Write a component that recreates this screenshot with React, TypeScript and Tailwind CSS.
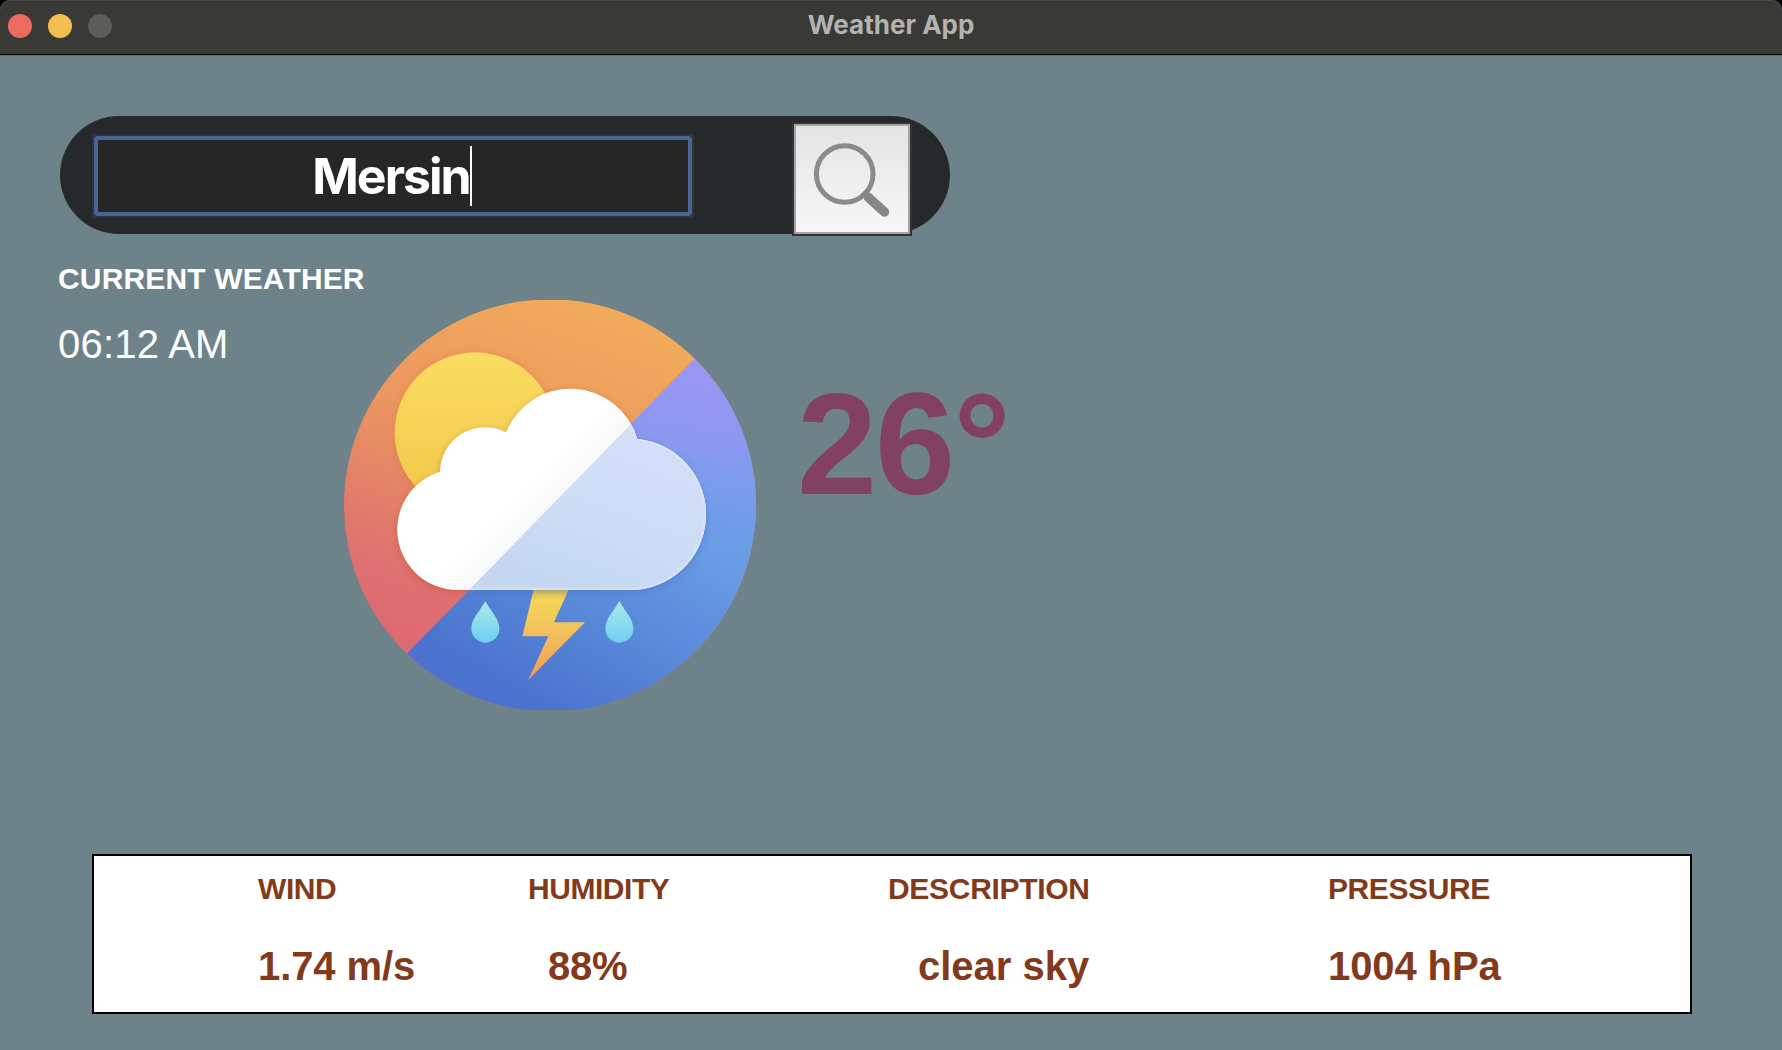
import React from "react";

const CLOUD =
  "M382 900 A181.5 181.5 0 0 1 330 545 A135 135 0 0 1 528 427 A208.6 208.6 0 0 1 922 447 A227 227 0 0 1 897 900 Z";

function Drop({ x }: { x: number }) {
  return (
    <path
      d={`M${x} 933 C${x + 13} 960 ${x + 42} 984 ${x + 42} 1016 A42 42 0 0 1 ${x - 42} 1016 C${x - 42} 984 ${x - 13} 960 ${x} 933 Z`}
      fill="url(#drop)"
    />
  );
}

function WeatherIcon() {
  return (
    <svg className="block h-[410px] w-[412px] shrink-0" viewBox="42 30 1236 1230" aria-label="Weather">
      <defs>
        <linearGradient id="warm" gradientUnits="userSpaceOnUse" x1="780" y1="60" x2="400" y2="1100">
          <stop offset="0" stopColor="#f1aa5b" />
          <stop offset="0.4" stopColor="#eb975f" />
          <stop offset="0.85" stopColor="#de7070" />
          <stop offset="1" stopColor="#dd6a70" />
        </linearGradient>
        <linearGradient id="cool" gradientUnits="userSpaceOnUse" x1="1100" y1="742" x2="760" y2="1334">
          <stop offset="0" stopColor="#6a9ce6" />
          <stop offset="0.5" stopColor="#5989d9" />
          <stop offset="1" stopColor="#4a72ce" />
        </linearGradient>
        <linearGradient id="violet" gradientUnits="userSpaceOnUse" x1="1130" y1="240" x2="1040" y2="800">
          <stop offset="0" stopColor="#9b95f4" />
          <stop offset="0.35" stopColor="#8d98f0" />
          <stop offset="0.65" stopColor="#7a9deb" stopOpacity="0.85" />
          <stop offset="1" stopColor="#6a9ce6" stopOpacity="0" />
        </linearGradient>
        <linearGradient id="sun" x1="0" y1="0" x2="0" y2="1">
          <stop offset="0" stopColor="#fadd62" />
          <stop offset="1" stopColor="#f2c648" />
        </linearGradient>
        <linearGradient id="bolt" x1="0" y1="0" x2="0" y2="1">
          <stop offset="0" stopColor="#dfbf4c" />
          <stop offset="0.14" stopColor="#f7d558" />
          <stop offset="0.5" stopColor="#f1be5b" />
          <stop offset="1" stopColor="#ee9c55" />
        </linearGradient>
        <linearGradient id="drop" x1="0" y1="0" x2="0" y2="1">
          <stop offset="0" stopColor="#a9e9e8" />
          <stop offset="1" stopColor="#6ecff3" />
        </linearGradient>
        <linearGradient id="white" gradientUnits="userSpaceOnUse" x1="590" y1="578" x2="662" y2="648">
          <stop offset="0" stopColor="#ffffff" />
          <stop offset="1" stopColor="#f8f8f8" />
        </linearGradient>
        <linearGradient id="glass" gradientUnits="userSpaceOnUse" x1="930" y1="420" x2="760" y2="900">
          <stop offset="0" stopColor="#d5def9" />
          <stop offset="0.5" stopColor="#cdddf6" />
          <stop offset="1" stopColor="#c6d8f1" />
        </linearGradient>
        <clipPath id="disc">
          <circle cx="660" cy="646" r="618" />
        </clipPath>
        <clipPath id="lower">
          <path d="M1295 0 L33 1294 H1320 V0 Z" />
        </clipPath>
        <clipPath id="cloud">
          <path d={CLOUD} />
        </clipPath>
        <filter id="soft" x="-10%" y="-10%" width="120%" height="120%">
          <feGaussianBlur stdDeviation="9" />
        </filter>
      </defs>
      <g clipPath="url(#disc)">
        <rect width="1320" height="1290" fill="url(#warm)" />
        <circle cx="435" cy="430" r="242" fill="#e0763c" opacity="0.5" filter="url(#soft)" />
        <circle cx="435" cy="428" r="241" fill="url(#sun)" />
        <g clipPath="url(#lower)">
          <rect width="1320" height="1290" fill="url(#cool)" />
          <rect width="1320" height="1290" fill="url(#violet)" />
        </g>
        <path d="M612 895 H718 L672 997 H765 L594 1171 L655 1039 H577 Z" fill="url(#bolt)" />
        <g filter="url(#soft)" opacity="0.45">
          <path d={CLOUD} transform="translate(0 6)" fill="#c0501c" />
          <g clipPath="url(#lower)">
            <path d={CLOUD} transform="translate(0 6)" fill="#386bc0" />
          </g>
        </g>
        <path d={CLOUD} fill="url(#white)" />
        <g clipPath="url(#lower)">
          <path d={CLOUD} fill="url(#glass)" />
          <g clipPath="url(#cloud)">
            <path d={CLOUD} fill="none" stroke="#dfe7f8" strokeOpacity="0.6" strokeWidth="14" />
          </g>
        </g>
      </g>
      <Drop x={466} />
      <Drop x={868} />
    </svg>
  );
}

function SearchIcon() {
  return (
    <svg className="block h-[106px] w-[112px]" viewBox="0 0 112 106" fill="none">
      <circle cx="48.7" cy="48" r="28.3" stroke="#8a8a8a" strokeWidth="5" />
      <path d="M72.5 71.5 L88.5 86" stroke="#868686" strokeWidth="9.5" strokeLinecap="round" />
      <path d="M66 70.5 L71.5 65" stroke="#868686" strokeWidth="5" />
    </svg>
  );
}

function Stat({ label, value, className, labelClass, valueClass }: { label: string; value: string; className: string; labelClass: string; valueClass: string }) {
  return (
    <div className={`flex shrink-0 flex-col whitespace-nowrap pt-[15px] ${className}`}>
      <span className={`text-[30px] leading-[36px] ${labelClass}`}>{label}</span>
      <span className={`mt-[35px] text-[40px] leading-[48px] ${valueClass}`}>{value}</span>
    </div>
  );
}

export default function App() {
  return (
    <div className="h-[1050px] w-[1782px] overflow-hidden bg-black font-['Liberation_Sans',Arial,sans-serif]">
      <div className="flex h-full flex-col overflow-hidden rounded-t-[10px] bg-[#6e8289]">
        <header className="grid h-[55px] shrink-0 grid-cols-[1fr_auto_1fr] rounded-t-[10px] border-b border-black bg-[#393936] shadow-[inset_0_1px_0_#4a4a48,0_1px_0_#5d6e74]">
          <div className="flex gap-4 pt-[14px] pl-2">
            <span className="size-6 rounded-full bg-[#ed6a5f]" />
            <span className="size-6 rounded-full bg-[#f5bf4f]" />
            <span className="size-6 rounded-full bg-[#5c5c5a]" />
          </div>
          <h1 className="pt-[9px] font-['Inter',sans-serif] text-[26px] leading-[32px] font-bold text-[#b3b3b1]">
            Weather App
          </h1>
          <div />
        </header>

        <div className="mt-[61px] ml-[60px] flex h-[118px] w-[890px] shrink-0 rounded-full bg-[#25292b]">
          <div className="mt-[18px] ml-[32px] h-[84px] w-[602px] bg-[#333333] p-[2px]">
            <div className="flex h-[80px] items-center justify-center rounded-[4px] border-4 border-[#456596] bg-[#262626]">
              <span className="-ml-[2px] font-['Inter',sans-serif] text-[50px] leading-[60px] font-bold tracking-[-2px] text-white">
                Mersin
              </span>
              <span className="h-[60px] w-[2px] bg-white" />
            </div>
          </div>
          <button className="mt-[6px] ml-[98px] h-[114px] w-[120px] border-2 border-[#333333]">
            <span className="block h-[110px] border-2 border-[#a6a6a6] bg-linear-to-b from-[#e4e4e4] to-[#f7f7f7]">
              <SearchIcon />
            </span>
          </button>
        </div>

        <main className="flex h-[476px] shrink-0">
          <section className="w-[344px] shrink-0 pt-[27px] pl-[58px] whitespace-nowrap text-white">
            <h2 className="text-[30px] leading-[36px] font-bold tracking-[0.15px]">CURRENT WEATHER</h2>
            <p className="mt-[23px] text-[40px] leading-[48px] tracking-[0.2px]">06:12 AM</p>
          </section>
          <div className="pt-[66px]">
            <WeatherIcon />
          </div>
          <p className="pt-[128px] pl-[41px] text-[144px] leading-[166px] font-bold tracking-[-2px] text-[#824062]">26°</p>
        </main>

        <section className="mt-[144px] ml-[92px] flex h-[160px] w-[1600px] shrink-0 border-2 border-black bg-white font-bold text-[#823a1b]">
          <Stat label="WIND" value="1.74 m/s" className="ml-[164px] w-[270px]" labelClass="tracking-[-0.4px]" valueClass="tracking-[-0.1px]" />
          <Stat label="HUMIDITY" value="88%" className="w-[360px]" labelClass="tracking-[-0.45px]" valueClass="ml-[20px] tracking-[-0.3px]" />
          <Stat label="DESCRIPTION" value="clear sky" className="w-[440px]" labelClass="tracking-[-0.3px]" valueClass="ml-[30px]" />
          <Stat label="PRESSURE" value="1004 hPa" className="" labelClass="tracking-[-0.4px]" valueClass="tracking-[-0.1px]" />
        </section>
      </div>
    </div>
  );
}
